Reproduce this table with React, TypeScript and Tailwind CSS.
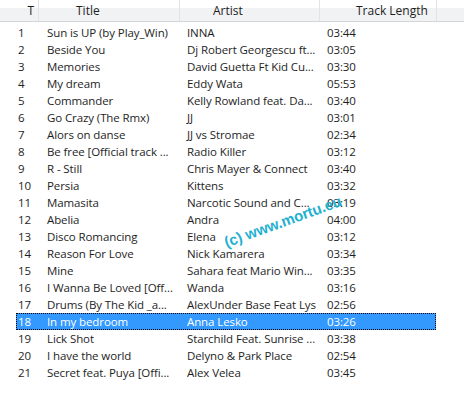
import React from "react"

const tracks: [string, string, string][] = [
  ["Sun is UP (by Play_Win)", "INNA", "03:44"],
  ["Beside You", "Dj Robert Georgescu ft...", "03:05"],
  ["Memories", "David Guetta Ft Kid Cu...", "03:30"],
  ["My dream", "Eddy Wata", "05:53"],
  ["Commander", "Kelly Rowland feat. Da...", "03:40"],
  ["Go Crazy (The Rmx)", "JJ", "03:01"],
  ["Alors on danse", "JJ vs Stromae", "02:34"],
  ["Be free [Official track ...", "Radio Killer", "03:12"],
  ["R - Still", "Chris Mayer & Connect", "03:40"],
  ["Persia", "Kittens", "03:32"],
  ["Mamasita", "Narcotic Sound and C...", "03:19"],
  ["Abelia", "Andra", "04:00"],
  ["Disco Romancing", "Elena", "03:12"],
  ["Reason For Love", "Nick Kamarera", "03:34"],
  ["Mine", "Sahara feat Mario Win...", "03:35"],
  ["I Wanna Be Loved [Off...", "Wanda", "03:16"],
  ["Drums (By The Kid _a...", "AlexUnder Base Feat Lys", "02:56"],
  ["In my bedroom", "Anna Lesko", "03:26"],
  ["Lick Shot", "Starchild Feat. Sunrise ...", "03:38"],
  ["I have the world", "Delyno & Park Place", "02:54"],
  ["Secret feat. Puya [Offi...", "Alex Velea", "03:45"],
]

const SELECTED = 18

export default function App() {
  return (
    <div className="relative w-[464px] h-[397px] bg-white overflow-hidden text-[11.5px] tracking-[-0.1px] text-[#1e1e1e] font-['Open_Sans','Noto_Sans',sans-serif]">
      {/* column headers */}
      <div className="grid grid-cols-[39px_141px_140px_117px_1fr] h-[22px] text-[12px] tracking-normal bg-gradient-to-b from-white from-40% to-[#f1f2f4] to-40% border-b border-[#d5d5d5]">
        <div className="flex items-center justify-end pr-[4px] border-r border-[#e2e3e5]">T</div>
        <div className="flex items-center pl-[37px] border-r border-[#e2e3e5]">Title</div>
        <div className="flex items-center pl-[33px] border-r border-[#e2e3e5]">Artist</div>
        <div className="flex items-center pl-[36px] border-r border-[#e2e3e5]">Track Length</div>
        <div />
      </div>

      {/* rows */}
      <div className="pt-[2px]">
        {tracks.map(([title, artist, len], i) => {
          const n = i + 1
          const sel = n === SELECTED
          return (
            <div
              key={n}
              className={
                sel
                  ? "ml-[16px] w-[420px] h-[17px] grid grid-cols-[23px_141px_140px_116px] items-center bg-[#3399ff] text-white outline-1 outline-dotted outline-black -outline-offset-1"
                  : "ml-[16px] w-[420px] h-[17px] grid grid-cols-[23px_141px_140px_116px] items-center"
              }
            >
              <div className="pl-[2px] whitespace-nowrap overflow-hidden">{n}</div>
              <div className="pl-[8px] whitespace-nowrap overflow-hidden">{title}</div>
              <div className="pl-[7px] whitespace-nowrap overflow-hidden">{artist}</div>
              <div className="pl-[7px] whitespace-nowrap overflow-hidden">{len}</div>
            </div>
          )
        })}
      </div>

      {/* watermark */}
      <div className="absolute left-[283px] top-[222px] -translate-x-1/2 -translate-y-1/2 -rotate-[20deg] whitespace-nowrap font-['Liberation_Sans',sans-serif] font-bold text-[15px] text-[#1fb1d0]">
        (c) www.mortu.eu
      </div>
    </div>
  )
}
